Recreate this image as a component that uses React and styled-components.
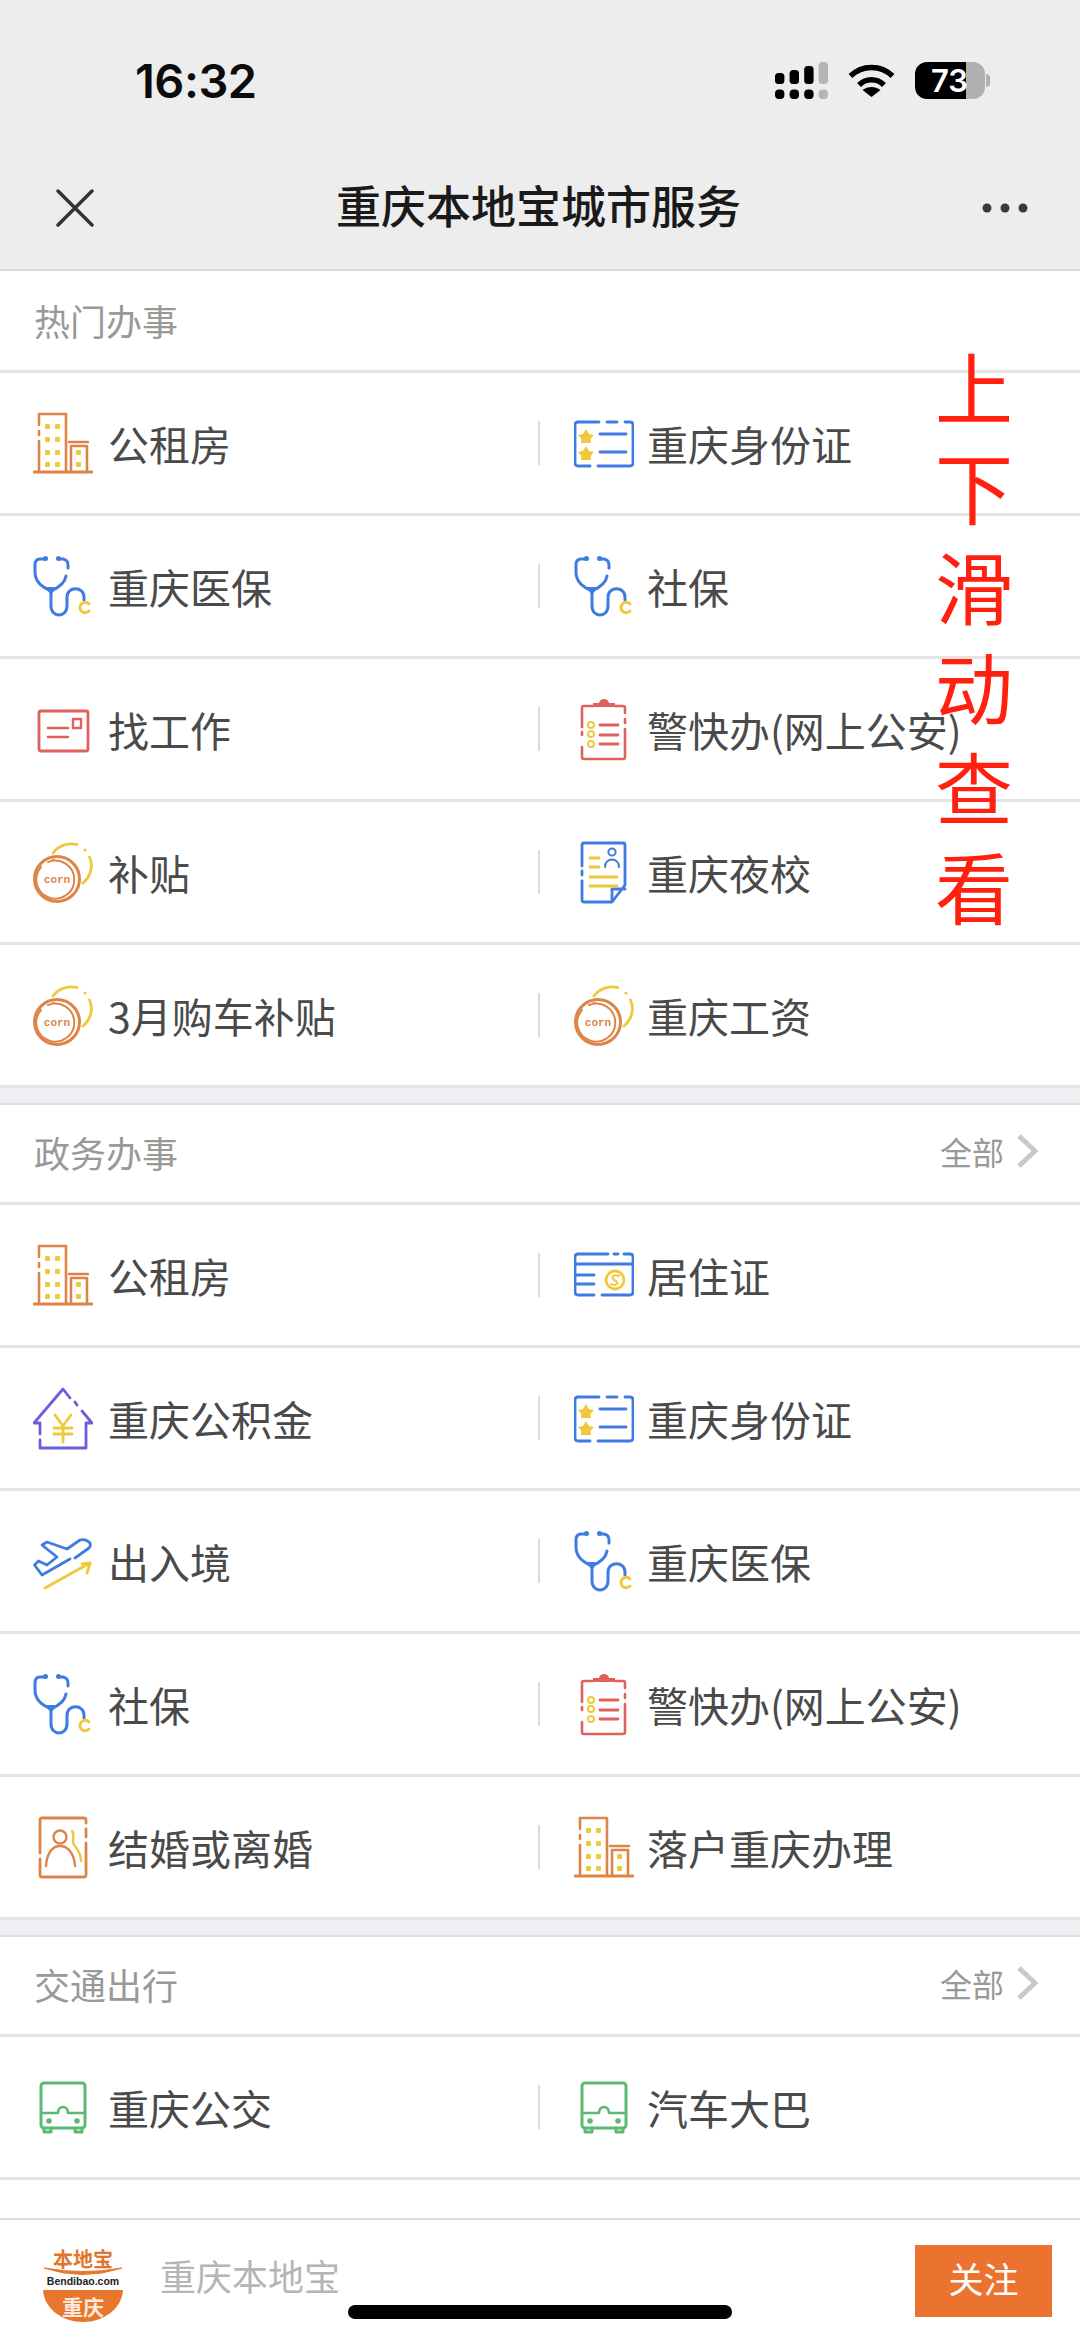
import React from 'react'
import styled, { createGlobalStyle } from 'styled-components'

const orange = '#dd8549'
const yellow = '#eec93b'
const blue = '#3f7be0'
const red = '#e0605c'
const purple = '#6a5fd8'
const green = '#5cb974'

const GlobalStyle = createGlobalStyle`
    html, body {
        margin: 0;
        padding: 0;
        background: #fff;
    }
    * {
        box-sizing: border-box;
    }
    body {
        font-family: "Noto Sans CJK SC", "Noto Sans", sans-serif;
    }
`

const Page = styled.div`
    position: relative;
    width: 1080px;
    height: 2341px;
    display: flex;
    flex-direction: column;
    overflow: hidden;
    background: #fff;
`

const Header = styled.header`
    flex-shrink: 0;
    height: 271px;
    background: #ededed;
    border-bottom: 2px solid #d9d9d9;
`

const StatusBar = styled.div`
    height: 160px;
    padding: 0 90px 0 135px;
    display: flex;
    align-items: center;
    justify-content: space-between;
`

const Time = styled.span`
    font-family: Inter, "Liberation Sans", sans-serif;
    font-size: 47px;
    font-weight: 600;
    letter-spacing: -0.5px;
    color: #0c0c0c;
`

const StatusIcons = styled.div`
    display: flex;
    align-items: center;
    gap: 20px;
`

const Battery = styled.div`
    position: relative;
    width: 70px;
    height: 37px;
    margin-right: 5px;
    padding-left: 16px;
    border-radius: 12px;
    background: linear-gradient(90deg, #000 51px, #b0b0b0 51px);
    color: #fff;
    font-family: Inter, "Liberation Sans", sans-serif;
    font-size: 31px;
    font-weight: 600;
    line-height: 37px;
    &::after {
        content: '';
        position: absolute;
        right: -5px;
        top: 12px;
        width: 4px;
        height: 13px;
        border-radius: 0 4px 4px 0;
        background: #b0b0b0;
    }
`

const Nav = styled.nav`
    height: 96px;
    padding: 0 52px 0 56px;
    display: grid;
    grid-template-columns: 1fr auto 1fr;
    align-items: center;
    svg:last-child {
        justify-self: end;
    }
`

const NavTitle = styled.h1`
    margin: 0 7px 6px 0;
    font-size: 45px;
    line-height: 60px;
    font-weight: 500;
    color: #1a1a1a;
`

const Main = styled.main`
    flex: 1;
    overflow: hidden;
`

const Sections = styled.div`
    background: #eeeff2;
`

const Section = styled.section`
    background: #fff;
    &:first-child {
        padding-top: 2px;
    }
    & + & {
        margin-top: 15px;
        border-top: 2px solid #dedede;
    }
`

const SectionHead = styled.div`
    height: 100px;
    padding: 0 42px 3px 34px;
    display: flex;
    align-items: center;
    justify-content: space-between;
    border-bottom: 3px solid #e4e4e4;
`

const SectionTitle = styled.h2`
    margin: 0;
    font-size: 36px;
    font-weight: 400;
    color: #999;
`

const MoreLink = styled.a`
    display: flex;
    align-items: center;
    gap: 12px;
    margin-bottom: 2px;
    font-size: 32px;
    color: #999;
`

const Row = styled.div`
    height: 143px;
    display: grid;
    grid-template-columns: 538px 1fr;
    border-bottom: 3px solid #e4e4e4;
`

const Cell = styled.div`
    display: flex;
    align-items: center;
    padding-left: ${p => (p.$second ? 0 : 33)}px;
`

const Divider = styled.i`
    width: 2px;
    height: 44px;
    margin-right: 34px;
    background: #dcdcdc;
`

const Label = styled.span`
    margin-left: ${p => (p.$second ? 13 : 15)}px;
    font-size: 41px;
    line-height: 60px;
    color: #4a4a4a;
    white-space: nowrap;
`

const Tail = styled.div`
    height: 60px;
    background: #fff;
`

const Glyph = styled.svg.attrs({ viewBox: '0 0 60 64', fill: 'none' })`
    width: 60px;
    height: 64px;
    flex-shrink: 0;
    stroke-linecap: round;
    stroke-linejoin: round;
`

const CornText = styled.text`
    font-family: "Liberation Mono", monospace;
    font-size: 11px;
    font-weight: 700;
    fill: ${orange};
`

const Footer = styled.footer`
    flex-shrink: 0;
    height: 123px;
    padding: 0 28px 0 40px;
    display: flex;
    align-items: center;
    border-top: 2px solid #dedede;
    background: #fff;
`

const LogoBox = styled.svg`
    width: 86px;
    height: 88px;
    margin-top: -3px;
    flex-shrink: 0;
`

const LogoHan = styled.text`
    font-family: "Noto Sans CJK SC", sans-serif;
    font-size: ${p => p.$size}px;
    font-weight: 700;
    fill: ${p => p.$fill};
`

const LogoDomain = styled.text`
    font-family: "Liberation Sans", sans-serif;
    font-size: 10.5px;
    font-weight: 700;
    fill: #222;
`

const FooterName = styled.span`
    flex: 1;
    margin: -11px 0 0 34px;
    font-size: 36px;
    color: #b5b5b5;
`

const FollowButton = styled.button`
    width: 137px;
    height: 72px;
    border: 0;
    padding: 0 0 6px;
    background: #ec7230;
    color: #fff;
    font-family: inherit;
    font-size: 35px;
`

const HomeBar = styled.div`
    position: absolute;
    left: 348px;
    bottom: 22px;
    width: 384px;
    height: 14px;
    border-radius: 7px;
    background: #000;
`

const ScrollHint = styled.div`
    position: absolute;
    left: 935px;
    top: 335px;
    width: 79px;
    font-size: 78px;
    line-height: 100px;
    color: #ff2010;
    word-break: break-all;
`

const Signal = () => (
    <svg width="53" height="37" viewBox="0 0 53 37">
        <g fill="#000">
            <rect x="0" y="11" width="9.4" height="11" rx="3.5" />
            <rect x="14.6" y="8" width="9.4" height="14" rx="3.5" />
            <rect x="29.2" y="4" width="9.4" height="18" rx="3.5" />
            <rect x="0" y="27.4" width="9.4" height="9.6" rx="4" />
            <rect x="14.6" y="27.4" width="9.4" height="9.6" rx="4" />
            <rect x="29.2" y="27.4" width="9.4" height="9.6" rx="4" />
        </g>
        <g fill="#b5b5b5">
            <rect x="43.6" y="0" width="9.4" height="22" rx="3.5" />
            <rect x="43.6" y="27.4" width="9.4" height="9.6" rx="4" />
        </g>
    </svg>
)

const Wifi = () => (
    <svg width="47" height="34" viewBox="0 0 47 34" fill="none">
        <path d="M2.5 13C14 1.5 33 1.5 44.5 13" stroke="#000" strokeWidth="5.5" />
        <path d="M11 22C18 15 29 15 36 22" stroke="#000" strokeWidth="5.5" />
        <path d="M14.5 27C20 23 27 23 32.5 27L23.5 34Z" fill="#000" />
    </svg>
)

const CloseIcon = () => (
    <svg width="38" height="38" viewBox="0 0 38 38" fill="none">
        <path d="M2 2L36 36M36 2L2 36" stroke="#333" strokeWidth="3.5" strokeLinecap="round" />
    </svg>
)

const MoreDots = () => (
    <svg width="46" height="10" viewBox="0 0 46 10" fill="#3a3a3a">
        <circle cx="5" cy="5" r="4.5" />
        <circle cx="23" cy="5" r="4.5" />
        <circle cx="41" cy="5" r="4.5" />
    </svg>
)

const Chevron = () => (
    <svg width="22" height="34" viewBox="0 0 22 34" fill="none">
        <path d="M3 2L19 17L3 32" stroke="#c9c9c9" strokeWidth="5" />
    </svg>
)

const Buildings = () => (
    <Glyph>
        <path d="M1 61H59" stroke={orange} strokeWidth="3" />
        <path d="M6 14V3H33V61M6 20V24M6 30V61" stroke={orange} strokeWidth="2.6" />
        <path d="M38 61V35H54V61M36 31H55" stroke={orange} strokeWidth="2.6" />
        <g fill={yellow}>
            {[13, 26, 39, 51].map(y => (
                <React.Fragment key={y}>
                    <rect x="12" y={y} width="5" height="5" rx="1" />
                    <rect x="22" y={y} width="5" height="5" rx="1" />
                </React.Fragment>
            ))}
            <rect x="43" y="39" width="5" height="5" rx="1" />
            <rect x="43" y="51" width="5" height="5" rx="1" />
        </g>
    </Glyph>
)

const StarCard = () => (
    <Glyph>
        <path d="M25 11H4Q1 11 1 14V52Q1 55 4 55H16M24 55H56Q59 55 59 52V14Q59 11 56 11H51M33 11H43" stroke={blue} strokeWidth="2.8" />
        <path d="M26 23H52M26 41H52" stroke={blue} strokeWidth="2.8" />
        <path d="M12 17L15 22L20 23L16.5 27L17 31H7L7.5 27L4 23L9 22Z" fill={yellow} transform="translate(0 1)" />
        <path d="M12 17L15 22L20 23L16.5 27L17 31H7L7.5 27L4 23L9 22Z" fill={yellow} transform="translate(0 18)" />
    </Glyph>
)

const Stethoscope = () => (
    <Glyph>
        <path d="M12 5H7Q2 5 2 11V18C2 28 9 33 18 37C27 33 32 29 33 22M35 14V11Q35 6 30 5H26" stroke={blue} strokeWidth="3" />
        <path d="M18 37V52C18 64 34 64 34 52V43C34 32 51 32 51 43V46" stroke={blue} strokeWidth="3" />
        <circle cx="12.5" cy="4.5" r="2.5" fill={blue} />
        <circle cx="25.5" cy="4.5" r="2.5" fill={blue} />
        <path d="M12 33L24 33L18 41Z" fill={blue} />
        <path d="M56 50A5.2 5.2 0 1 0 56 57" stroke={yellow} strokeWidth="3" />
    </Glyph>
)

const JobCard = () => (
    <Glyph>
        <rect x="6" y="14" width="49" height="40" rx="2" stroke={red} strokeWidth="2.8" />
        <path d="M15 31H35M15 40H35" stroke={red} strokeWidth="2.6" />
        <rect x="40" y="22" width="8" height="9" stroke={red} strokeWidth="2.4" />
    </Glyph>
)

const Clipboard = () => (
    <Glyph>
        <path d="M19 9H10Q8 9 8 11V30M8 35V38M8 50V60Q8 62 10 62H49Q51 62 51 60V32M51 26V22M51 16V11Q51 9 49 9H41" stroke={red} strokeWidth="2.6" />
        <path d="M19 10V6H25Q26 2 30 2Q34 2 35 6H41V10Z" fill={red} />
        <path d="M26 28H44M26 38H44M26 47H44" stroke={red} strokeWidth="2.8" />
        <g stroke={yellow} strokeWidth="2">
            <circle cx="17" cy="28" r="3" />
            <circle cx="17" cy="37" r="3" />
            <circle cx="17" cy="47" r="3" />
        </g>
    </Glyph>
)

const Coin = () => (
    <Glyph>
        <circle cx="24" cy="39" r="22.5" stroke={orange} strokeWidth="3" />
        <path d="M8 27A19 19 0 1 0 15 22M19 20.5L21 20" stroke={orange} strokeWidth="2" />
        <CornText x="24" y="43" textAnchor="middle">corn</CornText>
        <path d="M20 13C25 6 34 2.5 44 4.5" stroke={yellow} strokeWidth="2.8" />
        <circle cx="52" cy="10" r="1.6" fill={yellow} />
        <path d="M56.5 17C61 27 57 37 50 43" stroke={yellow} strokeWidth="2.8" />
    </Glyph>
)

const PersonDoc = () => (
    <Glyph>
        <path d="M8 26V5Q8 3 10 3H49Q51 3 51 5V45L38 62H10Q8 62 8 60V41M8 31V35M38 62V49H51" stroke={blue} strokeWidth="2.8" />
        <path d="M16 18H25M16 27H25M16 37H43M16 46H43" stroke={yellow} strokeWidth="2.8" />
        <circle cx="38" cy="12" r="3.6" stroke={blue} strokeWidth="2" />
        <path d="M31 27C31 17 45 17 45 27" stroke={blue} strokeWidth="2" />
    </Glyph>
)

const SocialCard = () => (
    <Glyph>
        <path d="M34 11H4Q1 11 1 14V49Q1 52 4 52H20M28 52H56Q59 52 59 49V14Q59 11 56 11H50M40 11H44" stroke={blue} strokeWidth="2.8" />
        <path d="M1 21H59M2 32H20M2 41H20" stroke={blue} strokeWidth="2.8" />
        <circle cx="41" cy="37" r="9" stroke={yellow} strokeWidth="2.8" />
        <path d="M45 33C41 31 37 33 39 36C41 38 45 39 43 41C41 42 38 42 37 41" stroke={yellow} strokeWidth="2" />
    </Glyph>
)

const HouseYen = () => (
    <Glyph>
        <path d="M37 12L30 3L1 37H7V48M7 54V62H53V37H59L49 25M44 19L42 16" stroke={purple} strokeWidth="2.8" />
        <path d="M22 29L30 40L38 29M30 40V56M21 42H39M21 48H39" stroke={yellow} strokeWidth="2.8" />
    </Glyph>
)

const Plane = () => (
    <Glyph>
        <path d="M37 30L9 46L1.5 36L5.5 32L14 36L24 28L9 16L14 13L34 20L47 11Q53 9.5 57 14Q58 17 56 19L42 29" stroke={blue} strokeWidth="2.8" />
        <path d="M12 59L57 34M49 35L57 34L54 44" stroke={yellow} strokeWidth="2.8" />
    </Glyph>
)

const Couple = () => (
    <Glyph>
        <path d="M7 38V5Q7 3 9 3H51Q53 3 53 5V8M53 14V22M53 28V60Q53 62 51 62H9Q7 62 7 60V44" stroke={orange} strokeWidth="2.8" />
        <circle cx="27" cy="22" r="6.5" stroke={orange} strokeWidth="2.4" />
        <path d="M13 51C14 37 20 31 27 31C34 31 41 37 42 51" stroke={orange} strokeWidth="2.4" />
        <path d="M39 16C43 22 37 26 42 31C46 36 48 42 48 46" stroke={yellow} strokeWidth="2.4" />
    </Glyph>
)

const Bus = () => (
    <Glyph>
        <rect x="8" y="8" width="44" height="45" rx="3" stroke={green} strokeWidth="3" />
        <path d="M8 38H25C25 30 35 30 35 38H52" stroke={green} strokeWidth="2.6" />
        <path d="M11 53V57H18V53M42 53V57H49V53" stroke={green} strokeWidth="3" />
        <circle cx="16" cy="46" r="2.8" fill={green} />
        <circle cx="44" cy="46" r="2.8" fill={green} />
    </Glyph>
)

const Logo = () => (
    <LogoBox viewBox="0 0 86 88">
        <circle cx="43" cy="44" r="43" fill="#fff" />
        <LogoHan x="43" y="32" textAnchor="middle" $size={20} $fill="#e0762c">本地宝</LogoHan>
        <path d="M4 33Q43 46 82 33Q43 40 4 33Z" fill="#e8762d" stroke="#e8762d" strokeWidth="1" />
        <LogoDomain x="43" y="50" textAnchor="middle">Bendibao.com</LogoDomain>
        <path d="M3 55H83C82 74 63 87 43 87C23 87 4 74 3 55Z" fill="#e8762d" />
        <LogoHan x="43" y="80" textAnchor="middle" $size={21} $fill="#fbe8da">重庆</LogoHan>
    </LogoBox>
)

const sections = [
    {
        title: '热门办事',
        rows: [
            [[Buildings, '公租房'], [StarCard, '重庆身份证']],
            [[Stethoscope, '重庆医保'], [Stethoscope, '社保']],
            [[JobCard, '找工作'], [Clipboard, '警快办(网上公安)']],
            [[Coin, '补贴'], [PersonDoc, '重庆夜校']],
            [[Coin, '3月购车补贴'], [Coin, '重庆工资']],
        ],
    },
    {
        title: '政务办事',
        more: true,
        rows: [
            [[Buildings, '公租房'], [SocialCard, '居住证']],
            [[HouseYen, '重庆公积金'], [StarCard, '重庆身份证']],
            [[Plane, '出入境'], [Stethoscope, '重庆医保']],
            [[Stethoscope, '社保'], [Clipboard, '警快办(网上公安)']],
            [[Couple, '结婚或离婚'], [Buildings, '落户重庆办理']],
        ],
    },
    {
        title: '交通出行',
        more: true,
        rows: [
            [[Bus, '重庆公交'], [Bus, '汽车大巴']],
        ],
    },
]

const App = () => {
    return (
        <Page>
            <GlobalStyle />
            <Header>
                <StatusBar>
                    <Time>16:32</Time>
                    <StatusIcons>
                        <Signal />
                        <Wifi />
                        <Battery>73</Battery>
                    </StatusIcons>
                </StatusBar>
                <Nav>
                    <CloseIcon />
                    <NavTitle>重庆本地宝城市服务</NavTitle>
                    <MoreDots />
                </Nav>
            </Header>
            <Main>
                <Sections>
                    {sections.map(section => (
                        <Section key={section.title}>
                            <SectionHead>
                                <SectionTitle>{section.title}</SectionTitle>
                                {section.more && (
                                    <MoreLink>全部<Chevron /></MoreLink>
                                )}
                            </SectionHead>
                            {section.rows.map(([left, right]) => {
                                const [LeftIcon, leftText] = left
                                const [RightIcon, rightText] = right
                                return (
                                    <Row key={leftText + rightText}>
                                        <Cell>
                                            <LeftIcon />
                                            <Label>{leftText}</Label>
                                        </Cell>
                                        <Cell $second>
                                            <Divider />
                                            <RightIcon />
                                            <Label $second>{rightText}</Label>
                                        </Cell>
                                    </Row>
                                )
                            })}
                        </Section>
                    ))}
                    <Tail />
                </Sections>
            </Main>
            <Footer>
                <Logo />
                <FooterName>重庆本地宝</FooterName>
                <FollowButton>关注</FollowButton>
            </Footer>
            <ScrollHint>上下滑动查看</ScrollHint>
            <HomeBar />
        </Page>
    )
}

export default App
